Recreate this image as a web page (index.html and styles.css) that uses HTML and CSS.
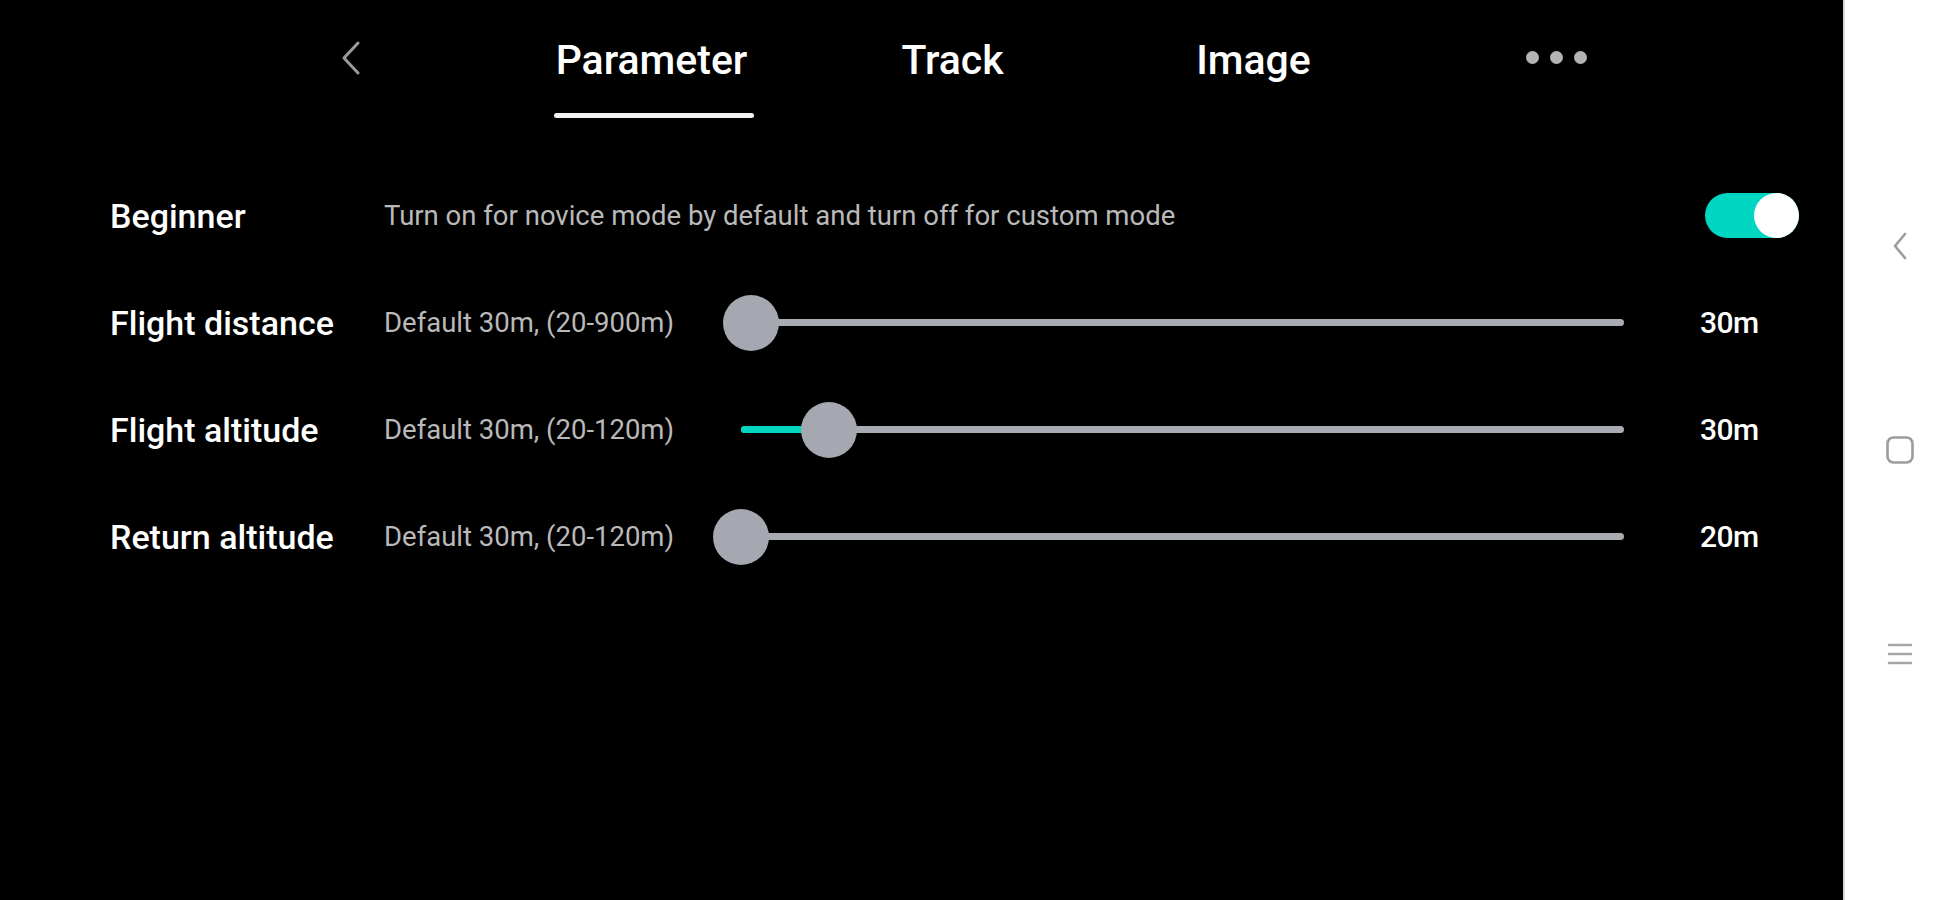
FILE: index.html
```html
<!DOCTYPE html>
<html lang="en">
<head>
<meta charset="utf-8">
<title>Parameter</title>
<link rel="stylesheet" href="styles.css">
</head>
<body>
<div class="screen">
  <main class="main">
    <header class="tabs">
      <div class="tab tab-back">
        <svg class="chev" width="22" height="34" viewBox="0 0 22 34"><path d="M18 2 L4 17 L18 32" fill="none" stroke="#9a9a9a" stroke-width="3" stroke-linecap="round" stroke-linejoin="round"/></svg>
      </div>
      <div class="tab active"><span class="tab-label">Parameter</span><span class="underline"></span></div>
      <div class="tab"><span class="tab-label">Track</span></div>
      <div class="tab"><span class="tab-label">Image</span></div>
      <div class="tab tab-more"><span class="dot"></span><span class="dot"></span><span class="dot"></span></div>
    </header>

    <section class="settings">
      <div class="row">
        <div class="label">Beginner</div>
        <div class="desc desc-wide">Turn on for novice mode by default and turn off for custom mode</div>
        <div class="toggle"><span class="knob"></span></div>
      </div>
      <div class="row">
        <div class="label">Flight distance</div>
        <div class="desc">Default 30m, (20-900m)</div>
        <div class="slider">
          <div class="track"><div class="fill" style="width:1.14%"></div><div class="thumb" style="left:1.14%"></div></div>
        </div>
        <div class="value">30m</div>
      </div>
      <div class="row">
        <div class="label">Flight altitude</div>
        <div class="desc">Default 30m, (20-120m)</div>
        <div class="slider">
          <div class="track"><div class="fill" style="width:10%"></div><div class="thumb" style="left:10%"></div></div>
        </div>
        <div class="value">30m</div>
      </div>
      <div class="row">
        <div class="label">Return altitude</div>
        <div class="desc">Default 30m, (20-120m)</div>
        <div class="slider">
          <div class="track"><div class="fill" style="width:0%"></div><div class="thumb" style="left:0%"></div></div>
        </div>
        <div class="value">20m</div>
      </div>
    </section>
  </main>

  <nav class="sysnav">
    <div class="navslot">
      <svg width="20" height="30" viewBox="0 0 20 30"><path d="M15 3 L5 15 L15 27" fill="none" stroke="#9c9c9c" stroke-width="2.6" stroke-linecap="round" stroke-linejoin="round"/></svg>
    </div>
    <div class="navslot">
      <svg width="30" height="30" viewBox="0 0 30 30"><rect x="2.5" y="2.5" width="25" height="25" rx="6" fill="none" stroke="#9c9c9c" stroke-width="2.6"/></svg>
    </div>
    <div class="navslot">
      <svg width="26" height="26" viewBox="0 0 26 26"><path d="M2 4 H24 M2 13 H24 M2 22 H24" fill="none" stroke="#a6a6a6" stroke-width="2.6" stroke-linecap="round"/></svg>
    </div>
  </nav>
</div>
</body>
</html>
```

FILE: styles.css
```css
* { box-sizing: border-box; }
html, body { margin: 0; padding: 0; }
body {
  width: 1953px;
  height: 900px;
  overflow: hidden;
  background: #000;
  font-family: Roboto, "Noto Sans", "Liberation Sans", sans-serif;
}
.screen {
  display: flex;
  width: 1953px;
  height: 900px;
}
.main {
  width: 1843px;
  height: 900px;
  background: #000;
  color: #fff;
}

/* Tabs */
.tabs {
  display: flex;
  height: 120px;
  padding-left: 200px;
}
.tab {
  width: 301px;
  display: flex;
  flex-direction: column;
  align-items: center;
  padding-top: 36px;
}
.tab-label {
  font-size: 41px;
  line-height: 48px;
  font-weight: 500;
  color: #fff;
}
.underline {
  display: block;
  width: 200px;
  height: 5px;
  margin-top: 29px;
  margin-left: 4px;
  background: #f2f2f2;
  border-radius: 3px;
}
.tab-back {
  padding-top: 41px;
}
.tab-more {
  flex-direction: row;
  justify-content: center;
  align-items: flex-start;
  gap: 11px;
  padding-top: 51px;
  padding-left: 3px;
}
.dot {
  width: 13px;
  height: 13px;
  border-radius: 50%;
  background: #b4b4b4;
}

/* Settings */
.settings {
  padding: 42px 44px 0 110px;
}
.row {
  display: flex;
  align-items: center;
  height: 107px;
}
.label {
  width: 274px;
  flex: none;
  font-size: 34px;
  font-weight: 500;
  color: #fff;
}
.desc {
  width: 329px;
  flex: none;
  font-size: 27.5px;
  color: #b9b9b9;
}
.desc-wide {
  width: auto;
  flex: 1;
}
.toggle {
  width: 94px;
  height: 45px;
  border-radius: 23px;
  background: #00d6c1;
  display: flex;
  justify-content: flex-end;
  flex: none;
}
.knob {
  width: 45px;
  height: 45px;
  border-radius: 50%;
  background: #fff;
}
.slider {
  width: 939px;
  height: 56px;
  flex: none;
  padding: 0 28px;
  display: flex;
  align-items: center;
}
.track {
  position: relative;
  width: 100%;
  height: 7px;
  border-radius: 4px;
  background: #a9abb2;
}
.fill {
  height: 100%;
  background: #00d6c1;
  border-radius: 4px 0 0 4px;
}
.thumb {
  position: absolute;
  top: 50%;
  width: 56px;
  height: 56px;
  margin: -28px 0 0 -28px;
  border-radius: 50%;
  background: #a5a8b0;
}
.value {
  margin-left: 48px;
  font-size: 30px;
  font-weight: 500;
  color: #fff;
  letter-spacing: -0.6px;
}

/* System navigation strip */
.sysnav {
  width: 110px;
  height: 900px;
  background: #fff;
  border-left: 2px solid #d8d8d8;
  display: flex;
  flex-direction: column;
  padding-top: 144px;
}
.navslot {
  height: 204px;
  display: flex;
  align-items: center;
  justify-content: center;
  padding-left: 2px;
}
```
